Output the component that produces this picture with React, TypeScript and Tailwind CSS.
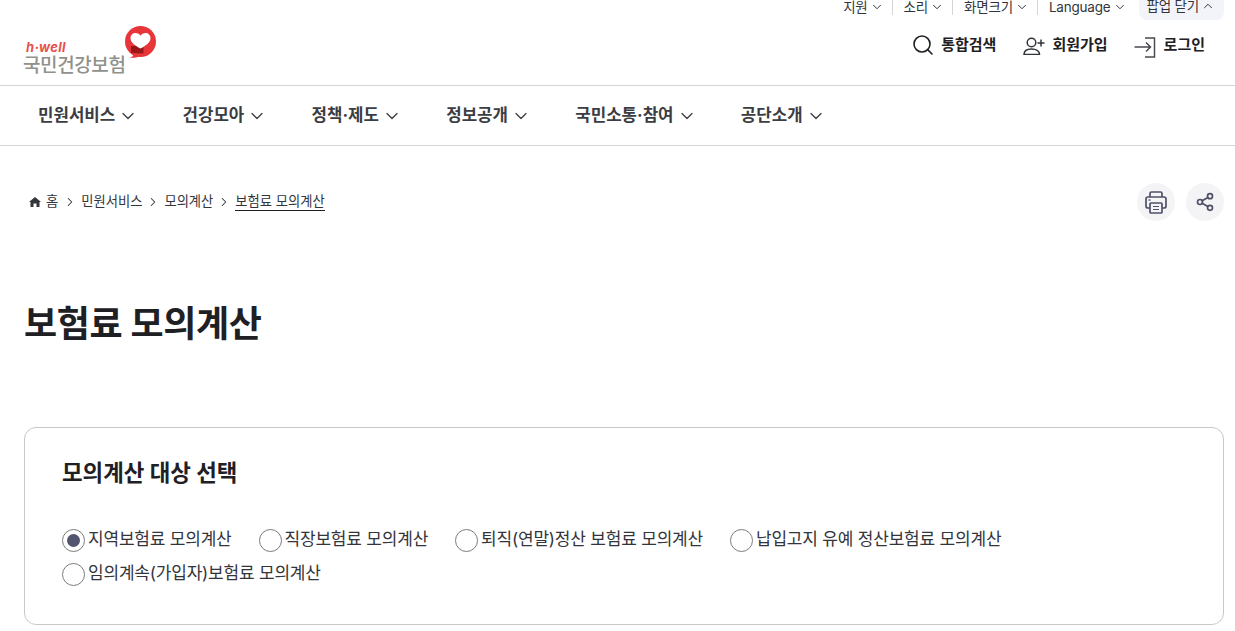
import { ChevronDown, ChevronRight, ChevronUp, Search, Share2 } from 'lucide-react';
import clsx from 'clsx';

const font = { fontFamily: 'Inter, "Noto Sans CJK KR", sans-serif' };

const utilItems = ['지원', '소리', '화면크기', 'Language'];
const navItems = ['민원서비스', '건강모아', '정책·제도', '정보공개', '국민소통·참여', '공단소개'];
const crumbs = ['민원서비스', '모의계산'];

function Logo() {
  return (
    <div className="flex items-start h-[48px] -ml-[1px]">
      <div className="flex flex-col mt-[14px] w-[102px] shrink-0">
        <span className="text-[13px] leading-[15px] font-bold italic text-[#e8504c] pl-[3px] tracking-[0.3px]">h·well</span>
        <span className="text-[19px] leading-[21px] font-medium text-[#8f918a] tracking-[-0.4px] whitespace-nowrap">국민건강보험</span>
      </div>
      <svg width="32" height="32" viewBox="0 0 32 32" className="shrink-0">
        <circle cx="15.500" cy="15.500" r="15.500" fill="#e8353a" />
        <path d="M4 31.500c2.500.2 4-1 4.500-3.500l6 2.500c-3 1.200-7 1.500-10.500 1z" fill="#e8353a" />
        <path d="M6 20h12.500v7.500L6 27z" fill="#9b1518" />
        <path d="M15.500 22.500c-5.500-3-10-5.800-10-10.500 0-2.900 2.300-5 5-5 2.200 0 4 1 5 2.800 1-1.800 2.800-2.800 5-2.800 2.700 0 5 2.100 5 5 0 4.700-4.500 7.500-10 10.500z" fill="#fff" />
      </svg>
    </div>
  );
}

function Radio({ label, checked }: { label: string; checked?: boolean }) {
  return (
    <label className="flex items-center h-[24px] gap-[3px] text-[17px] text-[#33353b] tracking-[-0.2px] whitespace-nowrap">
      <span className="w-[23px] h-[23px] rounded-full border border-[#7b7b7f] flex items-center justify-center shrink-0">
        {checked && <span className="w-[13px] h-[13px] rounded-full bg-[#53556f]" />}
      </span>
      {label}
    </label>
  );
}

export default function App() {
  return (
    <div style={font} className="h-[631px] overflow-hidden bg-white text-[#1f2024]">
      <header className="h-[86px] border-b border-[#d5d5d5] pl-[24px] pr-[11px] flex justify-between">
        <div className="pt-[26px]">
          <Logo />
        </div>
        <div className="flex flex-col items-end">
          <div className="flex items-start h-[20px] text-[13.500px] tracking-[-0.2px] text-[#33353b]">
            {utilItems.map((item) => (
              <div
                key={item}
                className={clsx(
                  'flex items-center gap-[2px] pl-[11px] h-[16px] mt-[-1px] whitespace-nowrap',
                  item === 'Language' ? 'pr-[12px]' : 'pr-[8px] border-r border-[#d5d5d5]',
                )}
              >
                {item}
                <ChevronDown size={14} strokeWidth={1.7} />
              </div>
            ))}
            <div className="flex items-center gap-[2px] h-[20px] pb-[8px] pl-[8px] pr-[9px] bg-[#f3f4fa] rounded-b-[8px] whitespace-nowrap">
              팝업 닫기
              <ChevronUp size={14} strokeWidth={1.7} />
            </div>
          </div>
          <div className="flex items-center gap-[26px] pr-[19px] mt-[13px] h-[24px] text-[15px] font-bold text-[#1f2024]">
            <div className="flex items-center gap-[6px] mr-[1px]">
              <Search size={24} strokeWidth={1.6} />
              통합검색
            </div>
            <div className="flex items-center gap-[7px]">
              <svg width="22" height="20" viewBox="0 0 22 20" fill="none" stroke="#33353b" strokeWidth="1.500">
                <circle cx="8.500" cy="7.500" r="4.300" />
                <path d="M1 19.500c0-3.500 3-5.500 7.500-5.500s8 2 8 5.500z" />
                <path d="M14.500 8h7M18 4.500v7" />
              </svg>
              회원가입
            </div>
            <div className="flex items-center gap-[6px]">
              <svg width="24" height="26" viewBox="0 0 24 26" fill="none" stroke="#4a4b50" strokeWidth="1.500">
                <path d="M0.500 15h16M12 10.500l4.500 4.500-4.500 4.500" />
                <path d="M11 6h9.500v19H11" />
              </svg>
              로그인
            </div>
          </div>
        </div>
      </header>

      <nav className="h-[60px] border-b border-[#d5d5d5] pl-[38px] flex items-center gap-[44.300px] text-[16.800px] font-bold text-[#3b3d42]">
        {navItems.map((item) => (
          <div key={item} className="flex items-center gap-[3px] whitespace-nowrap">
            {item}
            <ChevronDown size={20} strokeWidth={1.5} />
          </div>
        ))}
      </nav>

      <main className="pl-[12px] pr-[11px]">
        <div className="flex justify-between items-center pl-[17px] mt-[37px] h-[38px]">
          <div className="flex items-center text-[13.300px] text-[#33353b] whitespace-nowrap">
            <svg width="12" height="10" viewBox="0 0 12 10" fill="#33353b" className="mr-[5px]">
              <path d="M6 0L0 5h1.500v5h3V6.500h3V10h3V5H12z" />
            </svg>
            <span className="mr-[1px]">홈</span>
            {crumbs.map((c) => (
              <span key={c} className="flex items-center">
                <ChevronRight size={14} strokeWidth={1.8} className="mx-[4px]" />
                {c}
              </span>
            ))}
            <ChevronRight size={14} strokeWidth={1.8} className="mx-[4px]" />
            <span className="border-b border-[#1f2024] leading-[17px]">보험료 모의계산</span>
          </div>
          <div className="flex gap-[11px]">
            <div className="w-[38px] h-[38px] rounded-full bg-[#f4f4f6] flex items-center justify-center">
              <svg width="22" height="23" viewBox="0 0 22 23" fill="none" stroke="#4f5068" strokeWidth="1.700">
                <path d="M5 6V2.500A1.500 1.500 0 0 1 6.500 1h9A1.500 1.500 0 0 1 17 2.500V6" />
                <path d="M5 17H3a2 2 0 0 1-2-2V8a2 2 0 0 1 2-2h16a2 2 0 0 1 2 2v7a2 2 0 0 1-2 2h-2" />
                <rect x="5" y="12" width="12" height="10" rx="1" />
                <path d="M8 15.500h6M8 18.500h6" strokeWidth="1.200" />
                <path d="M3.500 9h2" strokeWidth="1.400" />
              </svg>
            </div>
            <div className="w-[38px] h-[38px] rounded-full bg-[#f4f4f6] flex items-center justify-center">
              <Share2 size={20} strokeWidth={2} className="text-[#4f5068]" />
            </div>
          </div>
        </div>

        <h1 className="pl-[12px] mt-[80px] text-[36px] leading-[46px] font-bold text-[#1f2024] tracking-[-0.35px]">보험료 모의계산</h1>

        <section className="ml-[12px] mt-[80px] h-[198px] rounded-[12px] border border-[#c8c8c8] px-[37px] pt-[31px]">
          <h2 className="text-[22.400px] leading-[28px] font-bold text-[#1f2024]">모의계산 대상 선택</h2>
          <div className="mt-[41px] flex flex-wrap gap-x-[27px] gap-y-[10px]">
            <Radio label="지역보험료 모의계산" checked />
            <Radio label="직장보험료 모의계산" />
            <Radio label="퇴직(연말)정산 보험료 모의계산" />
            <Radio label="납입고지 유예 정산보험료 모의계산" />
            <Radio label="임의계속(가입자)보험료 모의계산" />
          </div>
        </section>
      </main>
    </div>
  );
}
